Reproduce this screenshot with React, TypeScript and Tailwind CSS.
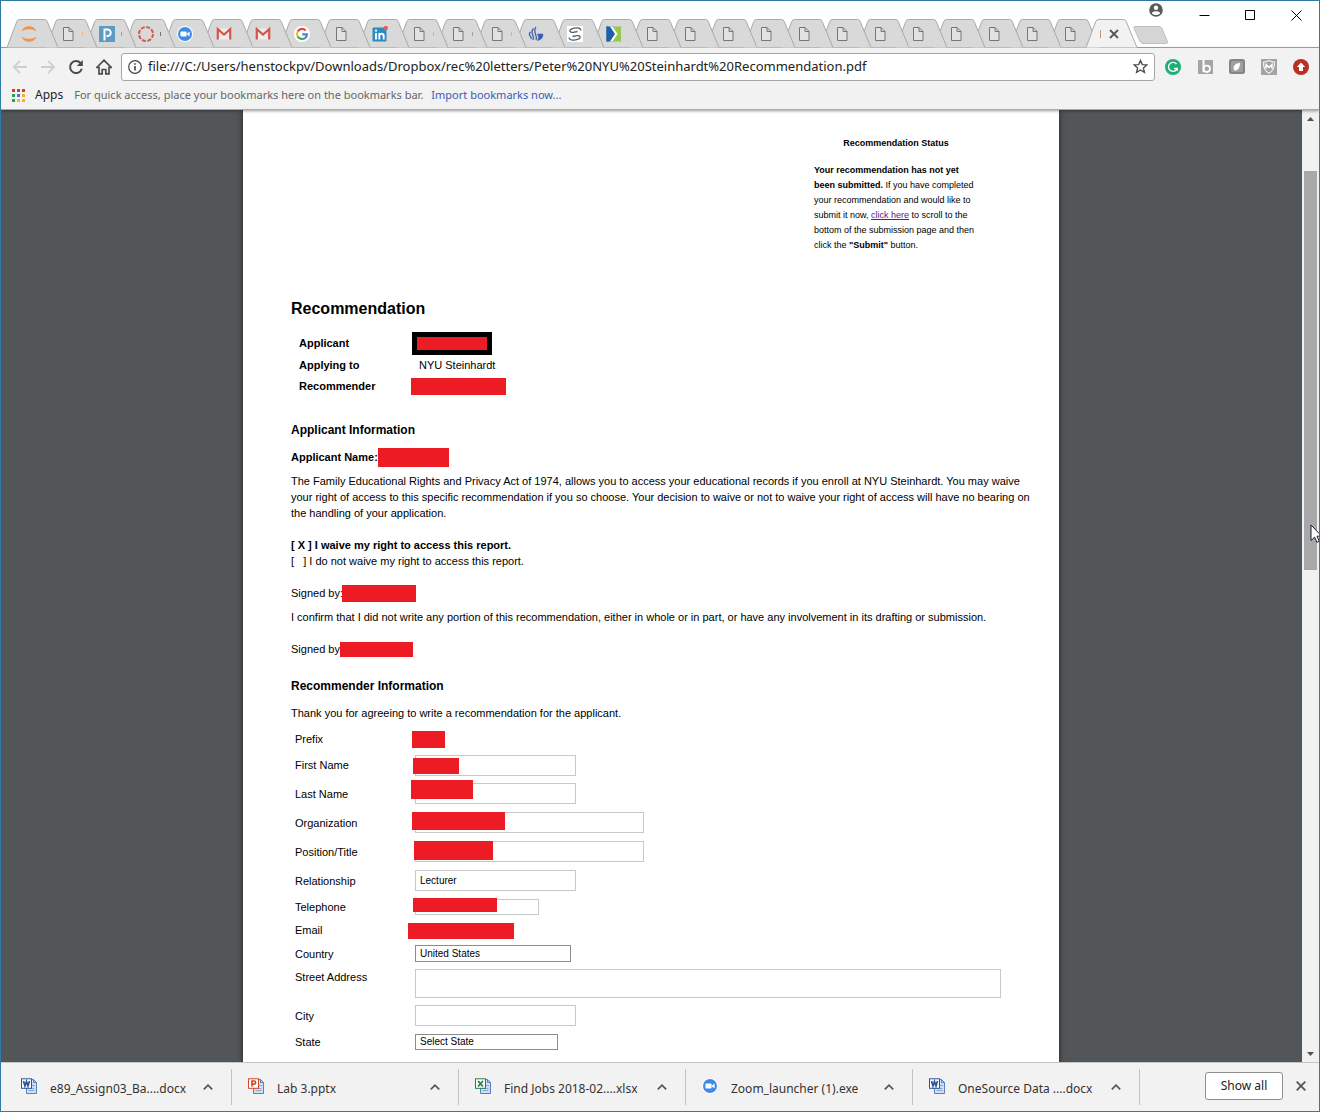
import React from "react";

type IconKind =
  | "jupyter" | "page" | "pandora" | "ring" | "zoom" | "gmail" | "google"
  | "linkedin" | "flame" | "swirl" | "diamond";

type Tab = { icon: IconKind; tick?: string; name: string };

const page: Tab = { icon: "page", name: "Document" };

const tabs: Tab[] = [
  { icon: "jupyter", name: "Notebook" },
  { icon: "page", tick: "bg-orange-300", name: "Document" },
  { icon: "pandora", tick: "bg-orange-400", name: "Pandora" },
  { icon: "ring", tick: "bg-gray-500", name: "Canvas" },
  { icon: "zoom", name: "Zoom" },
  { icon: "gmail", name: "Gmail" },
  { icon: "gmail", name: "Gmail" },
  { icon: "google", name: "Google" },
  page,
  { icon: "linkedin", name: "LinkedIn" },
  { icon: "page", tick: "bg-amber-400", name: "Document" },
  { icon: "page", tick: "bg-gray-400", name: "Document" },
  { icon: "page", tick: "bg-amber-400", name: "Document" },
  { icon: "flame", name: "Flame" },
  { icon: "swirl", name: "Swirl" },
  { icon: "diamond", name: "Diamond" },
  page, page, page, page, page, page, page, page, page, page, page, page,
];

function ZoomLogo() {
  return (
    <svg viewBox="0 0 16 16" className="size-4">
      <circle cx="8" cy="8" r="8" fill="#fff" />
      <circle cx="8" cy="8" r="7" fill="#3f8ae8" />
      <rect x="3.4" y="5.4" width="6.2" height="5.2" rx="1" fill="#fff" />
      <path d="M10 7.4 12.600 5.600v4.800L10 8.600z" fill="#fff" />
    </svg>
  );
}

function TabIcon({ kind }: { kind: IconKind }) {
  switch (kind) {
    case "jupyter":
      return (
        <svg viewBox="0 0 16 16" className="size-4">
          <path d="M.5 5.600C1.600 2 4.700.3 8 .3s6.400 1.700 7.500 5.300C13.400 3.900 11 3.200 8 3.200S2.600 3.900.5 5.600z" fill="#f0944d" />
          <path d="M.5 10.400C1.600 14 4.700 15.700 8 15.700s6.400-1.700 7.500-5.300C13.400 12.100 11 12.800 8 12.800s-5.400-.7-7.500-2.400z" fill="#f0944d" />
        </svg>
      );
    case "page":
      return (
        <svg viewBox="0 0 16 16" className="size-4" fill="none" stroke="#767676">
          <path d="M3.500 1.500h5.500l4 4v9h-9.500z" fill="#e2e2e2" />
          <path d="M9 1.500v4h4" />
        </svg>
      );
    case "pandora":
      return (
        <svg viewBox="0 0 16 16" className="size-4">
          <rect width="16" height="16" fill="#5b9bc4" />
          <path d="M5.500 14.500V3.500H8.500a3.200 3.200 0 0 1 0 6.500H7.500" fill="none" stroke="#fff" strokeWidth="2" />
        </svg>
      );
    case "ring":
      return (
        <svg viewBox="0 0 16 16" className="size-4">
          <circle cx="8" cy="8" r="7" fill="none" stroke="#d6584e" strokeWidth="2" strokeDasharray="4 1.500" />
        </svg>
      );
    case "zoom":
      return <ZoomLogo />;
    case "gmail":
      return (
        <svg viewBox="0 0 16 16" className="size-4">
          <rect x="2" y="2.500" width="12" height="11" fill="#f1ecec" />
          <path d="M1.800 13.500V3.200L8 8.600l6.200-5.400v10.300" fill="none" stroke="#d5554b" strokeWidth="2.200" />
        </svg>
      );
    case "google":
      return (
        <svg viewBox="0 0 16 16" className="size-4">
          <circle cx="8" cy="8" r="8" fill="#fff" />
          <g fill="none" strokeWidth="2.200">
            <path d="M11.700 4.400A5 5 0 0 0 3.700 5.500" stroke="#e24a3b" />
            <path d="M3.700 5.500a5 5 0 0 0 0 5" stroke="#f2b927" />
            <path d="M3.700 10.500a5 5 0 0 0 7.600 1.300" stroke="#3ea65a" />
            <path d="M11.300 11.800A5 5 0 0 0 13 8.300H8.200" stroke="#4a82e6" />
          </g>
        </svg>
      );
    case "linkedin":
      return (
        <svg viewBox="0 0 16 16" className="size-4">
          <rect x="0.500" y="1.500" width="14" height="14" rx="1" fill="#2a8cc0" />
          <path d="M4 7v6.500M7.300 13.500V7M7.300 10c0-3 4.400-3 4.400 0v3.500" stroke="#fff" strokeWidth="1.900" fill="none" />
          <circle cx="4" cy="4.700" r="1.100" fill="#fff" />
          <circle cx="13.800" cy="2" r="2.200" fill="#e0605c" />
        </svg>
      );
    case "flame":
      return (
        <svg viewBox="0 0 16 16" className="size-4" fill="none" stroke="#3d5cb0" strokeWidth="1.300">
          <path d="M2.500 6c-3.500 3 1.500 4 .5 7M5.500 2.500C1 7 7 8.500 5 14M8 .8C4 6 10 9 8 14" />
          <path d="M9.500 8H15c0 4-2 6-5.500 6.500C11 12 10.500 10 9.500 8z" fill="#3d5cb0" strokeWidth="0.500" />
        </svg>
      );
    case "swirl":
      return (
        <svg viewBox="0 0 16 16" className="size-4">
          <rect width="16" height="16" fill="#fff" />
          <path d="M14 4.500C13.500 1.300 9 1.200 4.700 2.800c-3.200 1.500-1.700 4.200 1.500 3.500l4.300-.8" fill="none" stroke="#51606b" strokeWidth="1.300" />
          <path d="M2 11.500c.5 3.200 5 3.300 9.300 1.700 3.200-1.500 1.700-4.200-1.500-3.500l-4.300.8" fill="none" stroke="#51606b" strokeWidth="1.300" />
        </svg>
      );
    case "diamond":
      return (
        <svg viewBox="0 0 16 16" className="size-4">
          <rect x="0.500" y="0.500" width="7" height="15" fill="#1e5fa8" />
          <rect x="7" y="0.500" width="8" height="15" fill="#93c94c" />
          <path d="M2 .5h4.500l5 7.500-5 7.500H2z" fill="#fff" />
          <path d="M.5 .5H4L9 8l-5 7.500H.5z" fill="#1e5fa8" />
        </svg>
      );
  }
}

function TabShape({ fill }: { fill: string }) {
  return (
    <svg viewBox="0 0 51 29" className="absolute inset-0 h-full w-full" fill="none">
      <path d="M0 28.500 9.800 2.500Q10.600.5 12.500.5H37.500Q39.400.5 40.200 2.500L51 28.500z" fill={fill} />
      <path d="M0 28.500 9.800 2.500Q10.600.5 12.500.5H37.500Q39.400.5 40.200 2.500L51 28.500" stroke="#a9a9a9" />
    </svg>
  );
}

function TabStrip() {
  return (
    <header className="relative flex h-[47px] shrink-0 items-end border-b border-[#a6a6a6] bg-white pl-1.5">
      <nav className="-mb-px flex items-end" aria-label="Tabs">
        {tabs.map((t, i) => (
          <button
            key={i}
            aria-label={t.name}
            style={{ zIndex: 40 - i }}
            className={`relative flex h-[29px] w-[51px] shrink-0 items-center pl-[14px] ${i === 0 ? "" : i > 15 ? "-ml-[13px]" : "-ml-3"}`}
          >
            <TabShape fill="#d9d9d9" />
            <span className="relative flex items-center gap-[6px]">
              <TabIcon kind={t.icon} />
              {t.tick && <span className={`h-1 w-px ${t.tick}`} />}
            </span>
          </button>
        ))}
        <button
          aria-label="Close tab"
          className="relative z-50 -ml-[13px] flex h-[29px] w-[51px] shrink-0 items-center gap-2 pl-[14px]"
        >
          <TabShape fill="#f2f2f2" />
          <span className="relative h-2 w-px bg-[#d2906a]" />
          <svg viewBox="0 0 10 10" className="relative size-2.5" stroke="#555" strokeWidth="1.800">
            <path d="M1 1l8 8M9 1l-8 8" />
          </svg>
        </button>
        <button aria-label="New tab" className="mb-1 -ml-1">
          <svg viewBox="0 0 36 18" className="h-[18px] w-9">
            <path d="M1.500.5H26q2 0 3 2l5.500 13q.6 2-1.500 2H10q-2 0-3-2L1 2.500Q.5.5 2 .5z" fill="#d5d5d5" stroke="#c0c0c0" />
          </svg>
        </button>
      </nav>
      <div className="absolute top-0 right-0 flex items-start">
        <button aria-label="Profile" className="mt-0.5 mr-[18px]">
          <svg viewBox="0 0 14 14" className="size-3.5">
            <circle cx="7" cy="7" r="6.800" fill="#5a5a5a" />
            <circle cx="7" cy="4.800" r="2.200" fill="#fff" />
            <path d="M2.800 10.200C4 7.600 10 7.600 11.200 10.200 9.500 12.600 4.500 12.600 2.800 10.200z" fill="#fff" />
          </svg>
        </button>
        {[
          { n: "Minimize", d: "M0.500 5.500h10" },
          { n: "Maximize", d: "M.5.5h9v9h-9z" },
          { n: "Close", d: "M.5.5l10 10M10.500.5l-10 10" },
        ].map((c) => (
          <button key={c.n} aria-label={c.n} className="flex h-7 w-[46px] items-center justify-center">
            <svg viewBox="0 0 11 11" className="size-[11px]" fill="none" stroke="#000">
              <path d={c.d} />
            </svg>
          </button>
        ))}
      </div>
    </header>
  );
}

function Toolbar() {
  return (
    <div className="flex h-[33px] items-center pt-1 pr-[10px] pl-[11px]">
      <div className="flex w-[99px] items-center gap-3">
        <button aria-label="Back">
          <svg viewBox="0 0 16 16" className="size-4" fill="none" stroke="#cfcfcf" strokeWidth="1.800">
            <path d="M15 8H2M8 1.800 1.800 8 8 14.200" />
          </svg>
        </button>
        <button aria-label="Forward">
          <svg viewBox="0 0 16 16" className="size-4" fill="none" stroke="#cfcfcf" strokeWidth="1.800">
            <path d="M1 8h13M8 1.800 14.200 8 8 14.200" />
          </svg>
        </button>
        <button aria-label="Reload">
          <svg viewBox="0 0 16 16" className="size-4" fill="none" stroke="#4a4a4a" strokeWidth="2">
            <path d="M13.800 9.800A6 6 0 1 1 12.500 4" />
            <path d="M14.800 1v6H8.800z" fill="#4a4a4a" stroke="none" />
          </svg>
        </button>
        <button aria-label="Home">
          <svg viewBox="0 0 16 16" className="size-4" fill="none" stroke="#4a4a4a" strokeWidth="1.700">
            <path d="M.8 8.500 8 1.200l7.200 7.300H13v6.300H9.800V10.500H6.200v4.300H3V8.500z" />
          </svg>
        </button>
      </div>
      <div className="ml-[10px] flex h-7 grow items-center rounded-[3px] border border-[#a6a6a6] bg-white px-[6px]">
        <svg viewBox="0 0 14 14" className="size-3.5 shrink-0" fill="none" stroke="#444" strokeWidth="1.200">
          <circle cx="7" cy="7" r="6.300" />
          <path d="M7 6v4.500M7 3.300v1.500" strokeWidth="1.600" />
        </svg>
        <input
          aria-label="Address"
          defaultValue="file:///C:/Users/henstockpv/Downloads/Dropbox/rec%20letters/Peter%20NYU%20Steinhardt%20Recommendation.pdf"
          className="ml-[6px] min-w-0 grow bg-transparent text-[13px] text-[#222] outline-none"
        />
        <button aria-label="Bookmark this page">
          <svg viewBox="0 0 16 16" className="size-[15px]" fill="none" stroke="#4a4a4a" strokeWidth="1.400">
            <path d="M8 1.500l1.900 4.400 4.800.4-3.600 3.200 1.100 4.700L8 11.700l-4.200 2.500 1.100-4.700L1.300 6.300l4.800-.4z" />
          </svg>
        </button>
      </div>
      <div className="ml-[10px] flex gap-4">
        <button aria-label="Grammarly">
          <svg viewBox="0 0 16 16" className="size-4">
            <circle cx="8" cy="8" r="8" fill="#1fae74" />
            <path d="M11.500 5A4.500 4.500 0 1 0 12.200 9.500H9M12.200 8.800v3" fill="none" stroke="#fff" strokeWidth="1.400" />
          </svg>
        </button>
        <button aria-label="Bing">
          <svg viewBox="0 0 16 16" className="size-4">
            <rect x="1" y="1" width="15" height="14" fill="#a5a5a5" />
            <path d="M6.500 1v12.200" stroke="#fff" strokeWidth="2" />
            <circle cx="9.800" cy="9.800" r="3.200" fill="none" stroke="#fff" strokeWidth="1.800" />
          </svg>
        </button>
        <button aria-label="Evernote">
          <svg viewBox="0 0 16 16" className="size-4">
            <rect width="16" height="15" rx="2.500" fill="#858585" />
            <rect x="2" y="2" width="12" height="11" rx="2" fill="#a0a0a0" />
            <path d="M5 11C3.500 7 6.500 4 11 4c0 4-1.500 7-4.500 7.500z" fill="#fff" />
          </svg>
        </button>
        <button aria-label="Shield">
          <svg viewBox="0 0 16 16" className="size-4">
            <rect width="16" height="16" fill="#a3a3a3" />
            <path d="M2.500 3q3 0 5.500-1.500Q10.500 3 13.500 3c.4 5.500-1.500 9-5.500 11.300C4 12 2.100 8.500 2.500 3z" fill="#a3a3a3" stroke="#eee" strokeWidth="1.200" />
            <path d="M5 9.500V5.500l3 3 3-3v4" fill="none" stroke="#fff" strokeWidth="1.500" />
          </svg>
        </button>
        <button aria-label="Update">
          <svg viewBox="0 0 16 16" className="size-4">
            <circle cx="8" cy="8" r="8" fill="#b93221" />
            <path d="M8 3.500 12.200 8H10v4H6V8H3.800z" fill="#fff" />
          </svg>
        </button>
      </div>
    </div>
  );
}

const dots = [
  "#d23f31", "#d23f31", "#d23f31",
  "#2e9e5b", "#3b78e7", "#f0b52c",
  "#2e9e5b", "#f0b52c", "#f0b52c",
];

function BookmarksBar() {
  return (
    <div className="flex h-7 items-center pl-[11px] text-[11px]">
      <button className="flex items-center gap-[10px] text-xs text-[#222]">
        <svg viewBox="0 0 13 13" className="size-[13px]">
          {dots.map((c, i) => (
            <rect key={i} x={(i % 3) * 5} y={Math.floor(i / 3) * 5} width="3" height="3" fill={c} />
          ))}
        </svg>
        Apps
      </button>
      <span className="ml-[11px] text-[#666]">For quick access, place your bookmarks here on the bookmarks bar.</span>
      <a href="#import" className="ml-2 text-[#3c5ab4]">Import bookmarks now...</a>
    </div>
  );
}

function Redacted({ className }: { className: string }) {
  return <span className={`block shrink-0 bg-[#ed1c24] ${className}`} />;
}

type Field = {
  id: string;
  label: string;
  row: string;
  box?: string;
  kind?: "input" | "select" | "none";
  value?: string;
  cover?: string;
};

const fields: Field[] = [
  { id: "prefix", label: "Prefix", row: "h-[25px]", kind: "none", cover: "-left-[3px] top-[5px] h-[17px] w-[33px]" },
  { id: "first", label: "First Name", row: "h-7", box: "h-[21px] w-[161px]", cover: "-left-0.5 top-[7px] h-4 w-[46px]" },
  { id: "last", label: "Last Name", row: "h-[29px]", box: "h-[21px] w-[161px]", cover: "-left-1 top-px h-[19px] w-[62px]" },
  { id: "org", label: "Organization", row: "h-[29px]", box: "h-[21px] w-[229px]", cover: "-left-[3px] top-1 h-[18px] w-[93px]" },
  { id: "title", label: "Position/Title", row: "h-[29px]", box: "h-[21px] w-[229px]", cover: "-left-px top-1 h-[19px] w-[79px]" },
  { id: "relationship", label: "Relationship", row: "h-[29px]", box: "h-[21px] w-[161px]", value: "Lecturer" },
  { id: "phone", label: "Telephone", row: "h-[23px]", box: "h-4 w-[124px]", cover: "-left-0.5 top-[3px] h-[14px] w-[84px]" },
  { id: "email", label: "Email", row: "h-6", kind: "none", cover: "-left-[7px] top-[5px] h-4 w-[106px]" },
  { id: "country", label: "Country", row: "h-[23px]", box: "h-[17px] w-[156px]", kind: "select", value: "United States" },
  { id: "street", label: "Street Address", row: "h-9", box: "h-[29px] w-[586px]" },
  { id: "city", label: "City", row: "h-[29px]", box: "h-[21px] w-[161px]" },
  { id: "state", label: "State", row: "h-6", box: "h-4 w-[143px]", kind: "select", value: "Select State" },
];

function FieldRow({ f }: { f: Field }) {
  const kind = f.kind ?? "input";
  const labelClass = `w-[120px] shrink-0 ${f.id === "street" ? "self-start pt-1" : ""}`;
  return (
    <div className={`flex items-center ${f.row}`}>
      {kind === "none" ? (
        <span className={labelClass}>{f.label}</span>
      ) : (
        <label htmlFor={f.id} className={labelClass}>{f.label}</label>
      )}
      <div className="relative flex h-full min-w-0 grow items-center">
        {kind === "input" && (
          <input id={f.id} defaultValue={f.value} className={`border border-[#c8c8c8] bg-white px-1 text-[10px] outline-none ${f.box}`} />
        )}
        {kind === "select" && (
          <select id={f.id} className={`appearance-none border border-[#8c8c8c] bg-white px-1 text-[10px] leading-[14px] outline-none ${f.box}`}>
            <option>{f.value}</option>
          </select>
        )}
        {f.cover && <Redacted className={`absolute ${f.cover}`} />}
      </div>
    </div>
  );
}

function Document() {
  return (
    <article className="mx-auto w-full max-w-[816px] bg-white px-12 pt-[26px] font-['Liberation_Sans',Arial,sans-serif] text-[11px] leading-4 text-black shadow-[0_0_6px_rgba(0,0,0,0.6)]">
      <aside className="mr-[33px] ml-auto w-[164px] text-[9px] leading-[15px]">
        <h2 className="text-center font-bold">Recommendation Status</h2>
        <p className="mt-3 whitespace-nowrap">
          <b>Your recommendation has not yet<br />been submitted.</b> If you have completed<br />
          your recommendation and would like to<br />
          submit it now, <a href="#submit" className="text-[#551a8b] underline">click here</a> to scroll to the<br />
          bottom of the submission page and then<br />
          click the <b>"Submit"</b> button.
        </p>
      </aside>

      <h1 className="mt-[44px] text-base leading-6 font-bold">Recommendation</h1>
      <dl className="mt-[11px] grid grid-cols-[112px_1fr] grid-rows-[22px_22px_20px] items-center pl-2">
        <dt className="font-bold">Applicant</dt>
        <dd className="pl-px"><Redacted className="h-[23px] w-20 border-[5px] border-black" /></dd>
        <dt className="font-bold">Applying to</dt>
        <dd className="pl-2">NYU Steinhardt</dd>
        <dt className="font-bold">Recommender</dt>
        <dd><Redacted className="h-[17px] w-[95px]" /></dd>
      </dl>

      <h2 className="mt-[26px] text-xs leading-4 font-bold">Applicant Information</h2>
      <p className="mt-[11px] flex h-4 items-center font-bold whitespace-nowrap">
        <span className="w-[87px]">Applicant Name:</span>
        <Redacted className="h-[19px] w-[71px]" />
      </p>
      <p className="mt-2 whitespace-nowrap">
        The Family Educational Rights and Privacy Act of 1974, allows you to access your educational records if you enroll at NYU Steinhardt. You may waive<br />
        your right of access to this specific recommendation if you so choose. Your decision to waive or not to waive your right of access will have no bearing on<br />
        the handling of your application.
      </p>
      <p className="mt-4 font-bold">[ X ] I waive my right to access this report.</p>
      <p>[ &nbsp; ] I do not waive my right to access this report.</p>
      <p className="mt-4 flex h-4 items-center whitespace-nowrap">
        <span className="w-[51px]">Signed by:</span>
        <Redacted className="h-[17px] w-[74px]" />
      </p>
      <p className="mt-2">I confirm that I did not write any portion of this recommendation, either in whole or in part, or have any involvement in its drafting or submission.</p>
      <p className="mt-4 flex h-4 items-center whitespace-nowrap">
        <span className="w-[49px]">Signed by</span>
        <Redacted className="h-[15px] w-[73px]" />
      </p>

      <h2 className="mt-[21px] text-xs leading-4 font-bold">Recommender Information</h2>
      <p className="mt-[11px]">Thank you for agreeing to write a recommendation for the applicant.</p>
      <form className="mt-[5px] pb-10 pl-1">
        {fields.map((f) => <FieldRow key={f.id} f={f} />)}
      </form>
    </article>
  );
}

function Scrollbar() {
  return (
    <div className="flex w-[17px] shrink-0 flex-col bg-[#f1f1f1]">
      <button aria-label="Scroll up" className="flex h-[17px] items-center justify-center">
        <svg viewBox="0 0 7 4" className="h-1 w-[7px]"><path d="M0 4 3.500 0 7 4z" fill="#505050" /></svg>
      </button>
      <div className="flex-[44]" />
      <div className="mx-0.5 flex-[399] bg-[#a8a8a8]" />
      <div className="flex-[475]" />
      <button aria-label="Scroll down" className="flex h-[17px] items-center justify-center">
        <svg viewBox="0 0 7 4" className="h-1 w-[7px]"><path d="M0 0 3.500 4 7 0z" fill="#505050" /></svg>
      </button>
    </div>
  );
}

type FileKind = "word" | "ppt" | "excel" | "zoom";

function OfficeIcon({ color, mark }: { color: string; mark: string }) {
  return (
    <svg viewBox="0 0 16 16" className="size-4" fill="none">
      <path d="M5.500 1.500h7l3 3v11h-10z" fill="#cfdff5" stroke="#5b7fb8" />
      <path d="M12.500 1.500v3h3" stroke="#5b7fb8" />
      <path d="M7.500 10.500h6M7.500 12.500h6M11 7.500h3" stroke="#8aa8d6" />
      <rect x="0.500" y="0.800" width="10" height="9.500" fill="#fff" stroke={color} />
      <path d={mark} stroke={color} strokeWidth="1.700" />
    </svg>
  );
}

function FileIcon({ kind }: { kind: FileKind }) {
  if (kind === "word") return <OfficeIcon color="#2a5699" mark="M2.500 3l1.500 5 1.500-4.500L7 8l1.500-5" />;
  if (kind === "ppt") return <OfficeIcon color="#d04a26" mark="M4 8.500V3h2a1.600 1.600 0 0 1 0 3.200H4" />;
  if (kind === "excel") return <OfficeIcon color="#2c7a3c" mark="M3 3l5 5.500M8 3 3 8.500" />;
  return <ZoomLogo />;
}

const downloads: { name: string; kind: FileKind }[] = [
  { name: "e89_Assign03_Ba....docx", kind: "word" },
  { name: "Lab 3.pptx", kind: "ppt" },
  { name: "Find Jobs 2018-02....xlsx", kind: "excel" },
  { name: "Zoom_launcher (1).exe", kind: "zoom" },
  { name: "OneSource Data ....docx", kind: "word" },
];

function DownloadShelf() {
  return (
    <footer className="flex h-[49px] shrink-0 items-stretch border-t border-[#c4c4c4] bg-[#f2f2f2] pl-1">
      {downloads.map((d) => (
        <div key={d.name} className="my-[6px] flex w-[227px] items-center border-r border-[#c4c4c4] pr-[18px] pl-4">
          <button className="flex min-w-0 grow items-center gap-[13px] text-xs whitespace-nowrap text-[#333]">
            <span className="mb-0.5 shrink-0"><FileIcon kind={d.kind} /></span>
            <span className="pt-1">{d.name}</span>
          </button>
          <button aria-label={`Options for ${d.name}`}>
            <svg viewBox="0 0 10 6" className="h-[6px] w-2.5" fill="none" stroke="#555" strokeWidth="1.700">
              <path d="M.8 5.300 5 1.200l4.200 4.100" />
            </svg>
          </button>
        </div>
      ))}
      <div className="ml-auto flex items-center gap-[13px] pr-[13px] pb-0.5">
        <button className="h-7 w-[78px] rounded-[3px] border border-[#8f8f8f] bg-white text-xs text-[#222]">Show all</button>
        <button aria-label="Close downloads bar">
          <svg viewBox="0 0 10 10" className="size-2.5" stroke="#555" strokeWidth="1.800">
            <path d="M.7.7l8.600 8.600M9.300.7.7 9.300" />
          </svg>
        </button>
      </div>
    </footer>
  );
}

export default function App() {
  return (
    <div className="relative flex h-screen flex-col overflow-hidden border border-[#2f7ba8] bg-white font-['Noto_Sans','Open_Sans',sans-serif]">
      <TabStrip />
      <div className="z-10 shrink-0 border-b border-[#a9a9a9] bg-[#f2f2f2] shadow-[0_1px_3px_rgba(0,0,0,0.4)]">
        <Toolbar />
        <BookmarksBar />
      </div>
      <main className="flex min-h-0 grow">
        <div className="min-w-0 grow overflow-hidden bg-[#525659] pr-px">
          <Document />
        </div>
        <Scrollbar />
      </main>
      <DownloadShelf />
      <svg viewBox="0 0 12 19" className="absolute top-[523px] -right-[3px] h-[19px] w-3">
        <path d="M1 1v15.500l3.600-3.400 2.300 5.200 2.400-1-2.300-5.100h4.800z" fill="#fff" stroke="#1a1a2a" />
      </svg>
    </div>
  );
}
